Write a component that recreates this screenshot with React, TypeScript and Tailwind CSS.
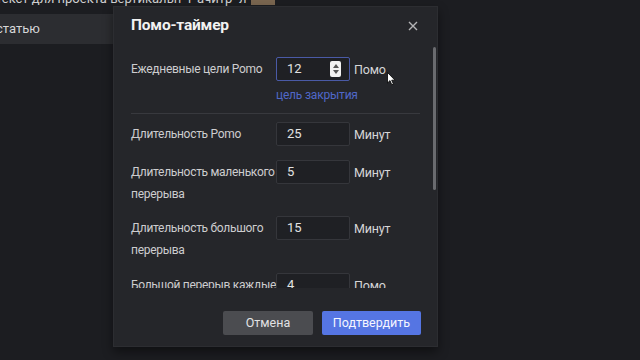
import React from "react";

const font = { fontFamily: 'Roboto, "Liberation Sans", sans-serif' };

function NumInput({ value, focused }: { value: string; focused?: boolean }) {
  return (
    <div
      className={
        "relative flex h-[24px] w-[74px] shrink-0 items-center rounded-[2px] border pl-[10px] text-[13px] text-[#e2e2e2] bg-[#1f2024] " +
        (focused ? "border-[#4a5aa6]" : "border-[#35363b]")
      }
    >
      {value}
      {focused && (
        <div className="absolute right-[8px] top-[3px] flex h-[16px] w-[11px] flex-col items-center justify-center gap-[2px] rounded-[2px] bg-[#f2f2f2]">
          <svg width="6" height="4" viewBox="0 0 6 4"><path d="M0 4 L3 0 L6 4 Z" fill="#555" /></svg>
          <svg width="6" height="4" viewBox="0 0 6 4"><path d="M0 0 L3 4 L6 0 Z" fill="#555" /></svg>
        </div>
      )}
    </div>
  );
}

function Row({ label, value, unit, focused, className }: { label: React.ReactNode; value: string; unit: string; focused?: boolean; className?: string }) {
  return (
    <div className={"flex items-start " + (className ?? "")}>
      <div className="w-[145px] shrink-0 whitespace-nowrap pt-[1px] text-[12px] leading-[22px] tracking-[-0.3px] text-[#cdcdcf]">{label}</div>
      <NumInput value={value} focused={focused} />
      <div className="ml-[4px] pt-[2px] text-[12.5px] leading-[22px] tracking-[-0.2px] text-[#d6d6d8]">{unit}</div>
    </div>
  );
}

export default function App() {
  return (
    <div className="relative h-[360px] w-[640px] overflow-hidden bg-[#1c1d21]" style={font}>
      {/* background page */}
      <div className="flex h-[14px] items-start overflow-hidden">
        <div className="-ml-[4px] -mt-[8px] flex items-center whitespace-nowrap text-[13px] leading-[14px] text-[#d0d0d0]">
          <span>текст для проекта вертикальн- г-ачитр- л</span>
          <span className="ml-[4px] inline-block h-[12px] w-[24px] bg-[#7a6650]" />
          <span className="ml-[10px] text-[#6a6a6e]">······ ······ ·······</span>
        </div>
      </div>
      <div className="w-[113px]">
        <div className="flex h-[30px] items-center overflow-hidden bg-[#2c2d31] text-[13px] text-[#d6d6d8]">
          <span className="-ml-[4px] whitespace-nowrap">статью</span>
        </div>
      </div>

      {/* modal */}
      <div className="absolute left-[113px] top-[6px] flex h-[341px] w-[325px] flex-col border border-[#2c2d31] bg-[#25262a] shadow-[0_5px_10px_rgba(0,0,0,0.45)]">
        <div className="flex h-[40px] items-center justify-between pb-[3px] pl-[17px] pr-[18px]">
          <div className="text-[15.5px] font-bold tracking-[-0.2px] text-[#f2f2f2]">Помо-таймер</div>
          <svg width="10" height="10" viewBox="0 0 10 10" className="mr-[1px]">
            <path d="M1 1 L9 9 M9 1 L1 9" stroke="#b4b4b6" strokeWidth="1.4" />
          </svg>
        </div>
        <div className="relative h-[241px] overflow-hidden">
          <div className="absolute right-[1px] top-0 h-[143px] w-[3px] rounded-full bg-[#6a6b6f]" />
          <div className="pl-[17px] pr-[17px] pt-[10px]">
            <Row label="Ежедневные цели Pomo" value="12" unit="Помо" focused />
            <div className="ml-[145px] mt-[3px] text-[12px] leading-[22px] tracking-[-0.2px] text-[#5068c8]">цель закрытия</div>
            <div className="mt-[7px] h-px bg-[#38393e]" />
            <Row className="mt-[8px]" label="Длительность Pomo" value="25" unit="Минут" />
            <Row className="mt-[14px]" label={<>Длительность маленького<br />перерыва</>} value="5" unit="Минут" />
            <Row className="mt-[11px]" label={<>Длительность большого<br />перерыва</>} value="15" unit="Минут" />
            <Row className="mt-[12px]" label="Большой перерыв каждые" value="4" unit="Помо" />
          </div>
        </div>
        <div className="flex justify-end gap-[9px] pr-[16px] pt-[23px]">
          <button className="h-[24px] w-[90px] rounded-[2px] bg-[#4b4c50] text-[12.5px] text-[#e2e2e4]">Отмена</button>
          <button className="h-[24px] w-[99px] rounded-[2px] bg-[#5575e3] text-[12.5px] text-[#f4f6ff]">Подтвердить</button>
        </div>
      </div>

      {/* mouse cursor */}
      <svg className="absolute left-[387px] top-[72px]" width="9" height="14" viewBox="0 0 9 14">
        <path d="M0.5 0.5 L0.5 11 L3 8.6 L4.8 12.8 L6.4 12.1 L4.7 8.2 L8 8.2 Z" fill="#fff" stroke="#000" strokeWidth="0.8" />
      </svg>
    </div>
  );
}
